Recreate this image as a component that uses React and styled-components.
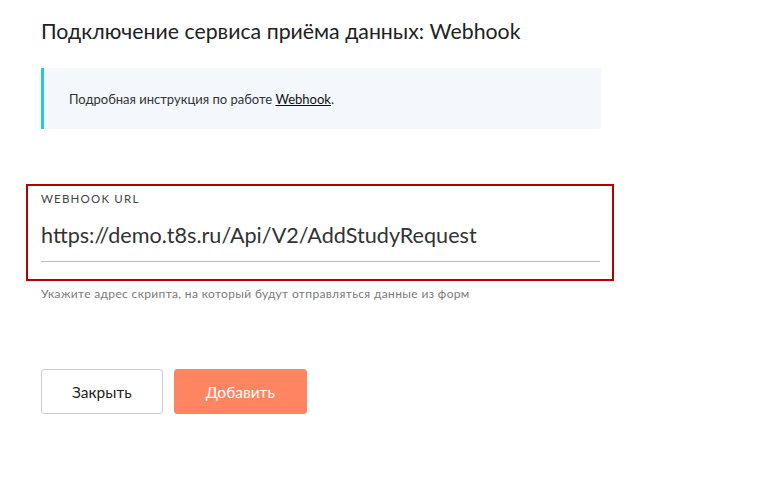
import React from "react";
import styled, { createGlobalStyle } from "styled-components";

const GlobalStyle = createGlobalStyle`
    body {
        margin: 0;
        background: #ffffff;
        font-family: "Lato", "Open Sans", sans-serif;
        color: #222222;
    }
`;

const App = () => {
    return (
        <>
            <GlobalStyle />
            <Page>
                <Title>Подключение сервиса приёма данных: Webhook</Title>
                <InfoBox>
                    Подробная инструкция по работе&nbsp;<InfoLink href='#'>Webhook</InfoLink>.
                </InfoBox>
                <FieldFrame>
                    <FieldLabel>Webhook URL</FieldLabel>
                    <FieldInput defaultValue='https://demo.t8s.ru/Api/V2/AddStudyRequest' />
                </FieldFrame>
                <Hint>Укажите адрес скрипта, на который будут отправляться данные из форм</Hint>
                <ButtonRow>
                    <Button>Закрыть</Button>
                    <Button primary>Добавить</Button>
                </ButtonRow>
            </Page>
        </>
    );
};

export default App;

const Page = styled.div`
    display: flex;
    flex-direction: column;
    align-items: flex-start;
    padding: 19px 0 0 41px;
`;

const Title = styled.h1`
    margin: 0;
    font-size: 21.3px;
    font-weight: 400;
    line-height: 25px;
    color: #222222;
`;

const InfoBox = styled.div`
    box-sizing: border-box;
    width: 560px;
    height: 61px;
    margin-top: 24px;
    padding: 0 0 0 25px;
    display: flex;
    align-items: center;
    background: #f4f8fd;
    border-left: 3px solid #25c7e6;
    font-size: 13px;
    color: #333333;
`;

const InfoLink = styled.a`
    color: #111111;
    text-decoration: underline;
`;

const FieldFrame = styled.div`
    box-sizing: border-box;
    width: 588px;
    margin: 55px 0 0 -15px;
    padding: 6px 12px 17px 13px;
    border: 2px solid #b50000;
    display: flex;
    flex-direction: column;
`;

const FieldLabel = styled.div`
    font-size: 11.5px;
    line-height: 14px;
    text-transform: uppercase;
    letter-spacing: 1.2px;
    color: #444444;
`;

const FieldInput = styled.input`
    margin-top: 15px;
    padding: 0 0 12px;
    border: none;
    border-bottom: 1px solid #bbbbbb;
    outline: none;
    font-family: inherit;
    font-size: 21.6px;
    line-height: 28px;
    color: #333333;
    background: transparent;
`;

const Hint = styled.div`
    margin-top: 6px;
    font-size: 12px;
    line-height: 14px;
    letter-spacing: 0.35px;
    color: #7a7a7a;
`;

const ButtonRow = styled.div`
    display: flex;
    gap: 11px;
    margin-top: 68px;
`;

const Button = styled.button`
    box-sizing: border-box;
    height: 45px;
    padding: 0 ${(props) => (props.primary ? "31px" : "30px")};
    border-radius: 3px;
    border: 1px solid ${(props) => (props.primary ? "#ff8562" : "#cccccc")};
    background: ${(props) => (props.primary ? "#ff8562" : "#ffffff")};
    color: ${(props) => (props.primary ? "#ffffff" : "#222222")};
    font-family: inherit;
    font-size: 15.5px;
    cursor: pointer;
`;
